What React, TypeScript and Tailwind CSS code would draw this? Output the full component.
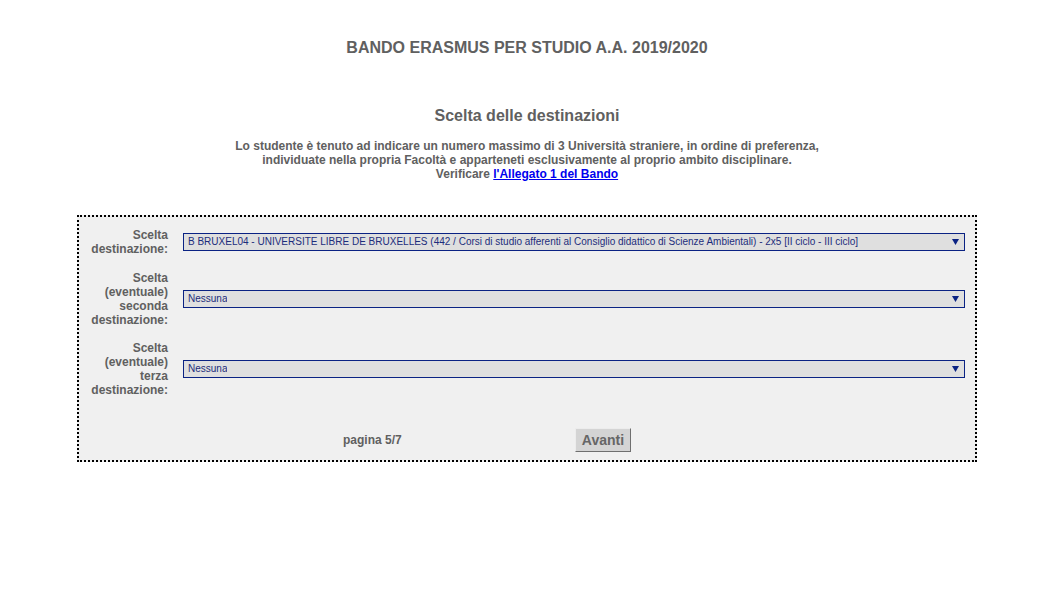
function FakeSelect({ value }: { value: string }) {
  return (
    <div className="flex h-[18px] flex-1 items-center justify-between border border-[#0a2283] bg-[#dfdfdf] pl-[4px] pr-[5px]">
      <span className="truncate text-[10px] leading-[12px] text-[#1c2d7c]">{value}</span>
      <svg width="7" height="6" viewBox="0 0 7 6" className="shrink-0">
        <polygon points="0,0 7,0 3.5,6" fill="#0a2283" />
      </svg>
    </div>
  );
}

const rows = [
  {
    label: "Scelta destinazione:",
    value:
      "B BRUXEL04 - UNIVERSITE LIBRE DE BRUXELLES (442 / Corsi di studio afferenti al Consiglio didattico di Scienze Ambientali) - 2x5 [II ciclo - III ciclo]",
    gap: "",
  },
  { label: "Scelta (eventuale) seconda destinazione:", value: "Nessuna", gap: "mt-[15px]" },
  { label: "Scelta (eventuale) terza destinazione:", value: "Nessuna", gap: "mt-[14px]" },
];

export default function App() {
  return (
    <div className="min-h-screen bg-white font-['Liberation_Sans',Arial,sans-serif] text-[#606060]">
      <h1 className="pt-[39px] text-center text-[16px] font-bold leading-[18px]">
        BANDO ERASMUS PER STUDIO A.A. 2019/2020
      </h1>
      <h2 className="mt-[50px] text-center text-[16px] font-bold leading-[18px]">
        Scelta delle destinazioni
      </h2>
      <p className="mt-[14px] text-center text-[12px] font-bold leading-[14px]">
        Lo studente è tenuto ad indicare un numero massimo di 3 Università straniere, in ordine di preferenza,
        <br />
        individuate nella propria Facoltà e apparteneti esclusivamente al proprio ambito disciplinare.
        <br />
        Verificare{" "}
        <a href="#" className="text-[#0000ee] underline">
          l'Allegato 1 del Bando
        </a>
      </p>

      <div className="mx-auto mt-[34px] w-[900px] border-2 border-dotted border-black bg-[#f0f0f0] pb-[8px] pt-[11px]">
        {rows.map((r) => (
          <div key={r.label} className={`flex items-center pr-[10px] ${r.gap}`}>
            <div className="w-[89px] shrink-0 text-right text-[12px] font-bold leading-[14px]">{r.label}</div>
            <div className="ml-[15px] flex flex-1">
              <FakeSelect value={r.value} />
            </div>
          </div>
        ))}

        <div className="mt-[31px] flex items-center pl-[264px]">
          <span className="w-[232px] text-[12px] font-bold leading-[14px]">pagina 5/7</span>
          <button className="h-[24px] w-[56px] border border-b-[#6f6f6f] border-l-[#ececec] border-r-[#6f6f6f] border-t-[#ececec] bg-[#d4d4d4] text-[14px] font-bold leading-[16px] text-[#666]">
            Avanti
          </button>
        </div>
      </div>
    </div>
  );
}
